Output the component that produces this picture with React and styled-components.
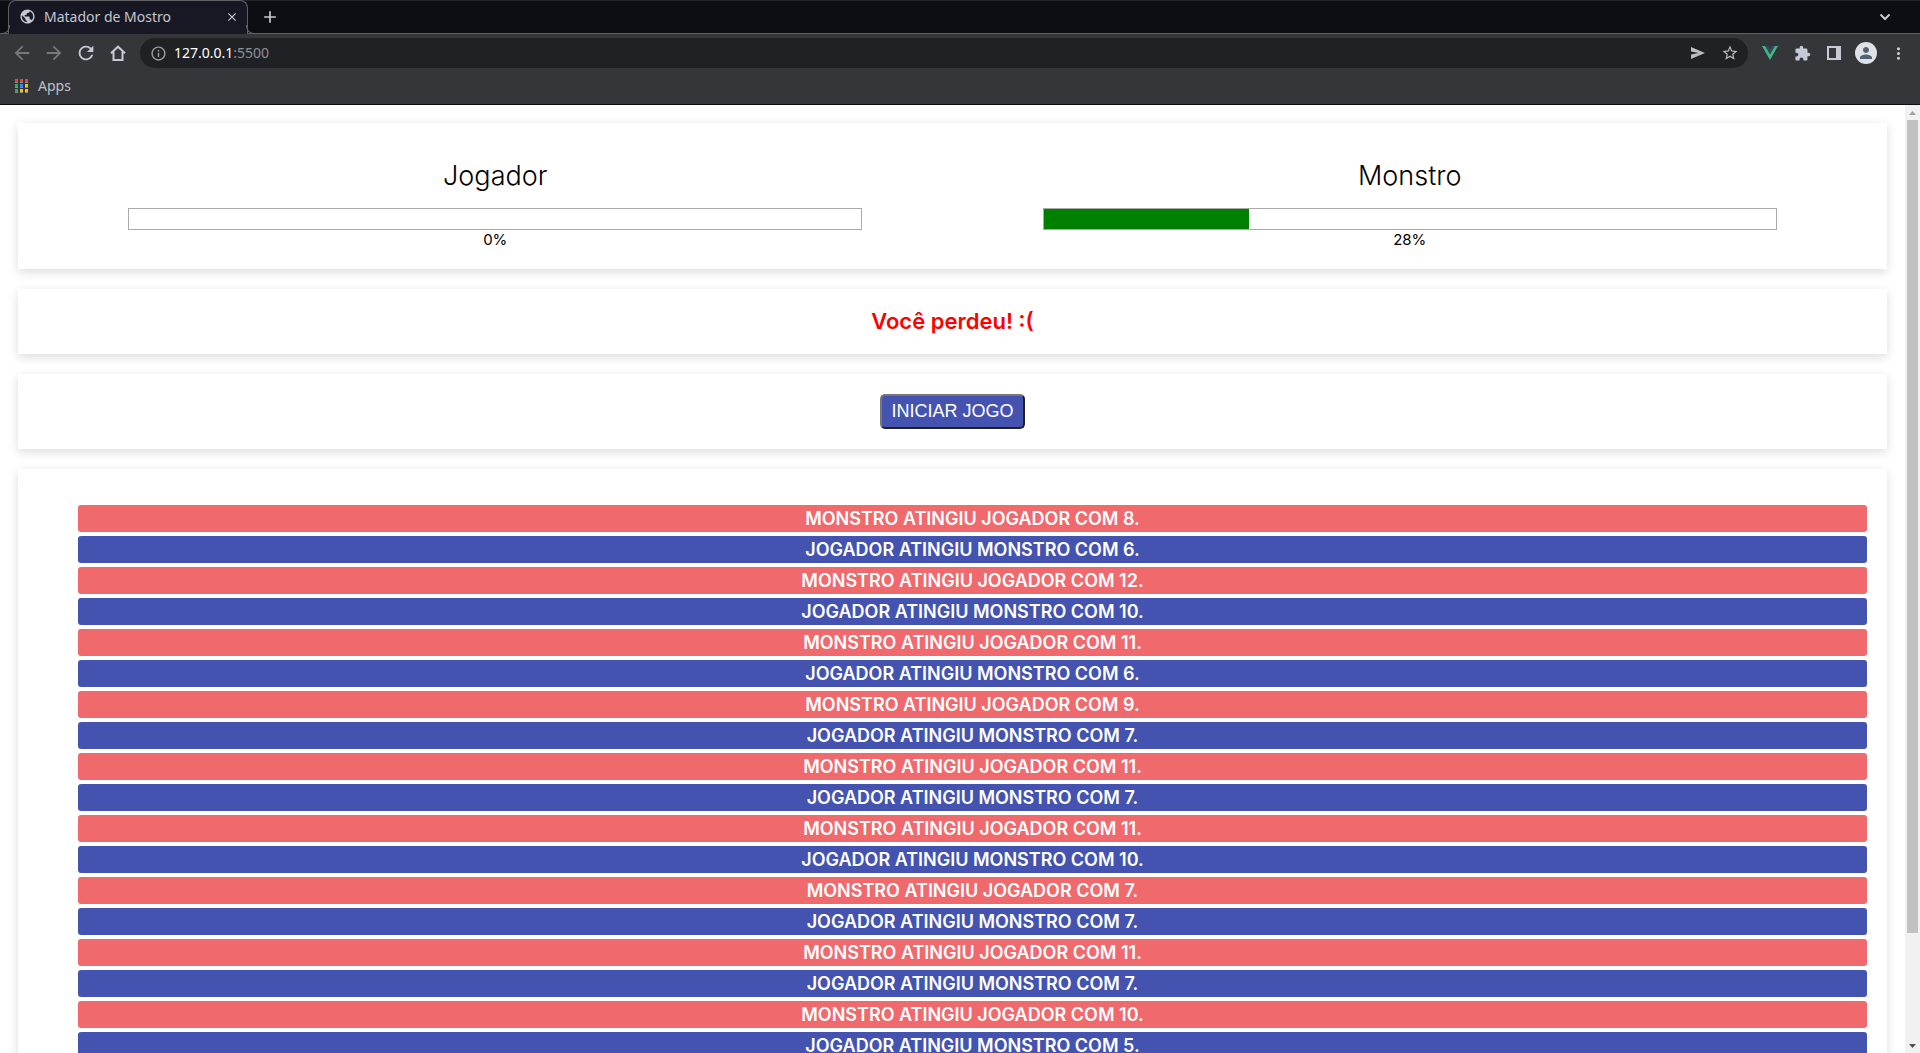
import React from "react";
import styled, { createGlobalStyle } from "styled-components";
import { MdArrowBack, MdArrowForward, MdRefresh, MdInfoOutline, MdStarBorder, MdExtension, MdPublic, MdPerson, MdSend, MdMoreVert, MdClose, MdAdd } from "react-icons/md";

const GlobalStyle = createGlobalStyle`
  * { box-sizing: border-box; }
  body { margin: 0; background: #fff; }
`;

const uiFont = `"Noto Sans", "Open Sans", sans-serif`;
const pageFont = `Inter, "Open Sans", sans-serif`;

const Browser = styled.div`
  display: flex;
  flex-direction: column;
  height: 100vh;
  overflow: hidden;
`;

const TabBar = styled.div`
  display: flex;
  align-items: center;
  height: 34px;
  padding: 0 24px 0 8px;
  background: #0d0e13;
  border-top: 1px solid #24262b;
  border-bottom: 1px solid #5f6064;
  font-family: ${uiFont};
`;

const Tab = styled.div`
  position: relative;
  display: flex;
  align-items: center;
  gap: 8px;
  width: 240px;
  height: 34px;
  padding: 0 7px 2px 10px;
  background: #181825;
  border: 1px solid #5f6064;
  border-bottom: 0;
  border-radius: 8px 8px 0 0;
  color: #c5c6d0;
  font-size: 14px;
  line-height: 20px;

  &::before,
  &::after {
    content: "";
    position: absolute;
    bottom: 0;
    width: 8px;
    height: 8px;
    border-bottom: 1px solid #5f6064;
  }
  &::before {
    left: -8px;
    border-right: 1px solid #5f6064;
    border-radius: 0 0 8px 0;
  }
  &::after {
    right: -8px;
    border-left: 1px solid #5f6064;
    border-radius: 0 0 0 8px;
  }
`;

const TabTitle = styled.span`
  flex: 1;
  white-space: nowrap;
`;

const IconButton = styled.button`
  display: flex;
  align-items: center;
  justify-content: center;
  flex: none;
  width: ${(p) => p.$width || 32}px;
  height: 28px;
  padding: 0;
  border: 0;
  background: none;
  color: ${(p) => p.$color || "#c5cad6"};
`;

const Spacer = styled.div`
  flex: 1;
`;

const Toolbar = styled.div`
  display: flex;
  align-items: center;
  height: 38px;
  padding: 0 6px;
  background: #35363a;
`;

const Omnibox = styled.div`
  display: flex;
  flex: 1;
  align-items: center;
  height: 30px;
  margin: 0 6px;
  padding: 0 2px;
  border-radius: 15px;
  background: #202124;
  font: 14px/20px ${uiFont};
`;

const Address = styled.input`
  field-sizing: content;
  margin: 0;
  padding: 0;
  border: 0;
  outline: 0;
  background: none;
  color: #fff;
  font: inherit;
`;

const Port = styled.span`
  color: #8f9094;
`;

const Bookmarks = styled.nav`
  display: flex;
  align-items: center;
  height: 33px;
  padding: 0 15px 4px;
  background: #35363a;
  border-bottom: 1px solid #0c0d10;
`;

const Bookmark = styled.a`
  display: flex;
  align-items: center;
  gap: 10px;
  color: #bdc1cc;
  font: 14px/20px ${uiFont};
  text-decoration: none;
`;

const AppsGrid = styled.span`
  display: grid;
  grid-template-columns: repeat(3, 3px);
  gap: 1px 2px;
`;

const Dot = styled.i`
  height: 4px;
  background: ${(p) => p.$color};
  border-bottom: 1px solid #8b8c90;
`;

const Avatar = styled.span`
  display: flex;
  align-items: center;
  justify-content: center;
  width: 22px;
  height: 22px;
  border-radius: 50%;
  background: #dee1e6;
  color: #566073;
`;

const Viewport = styled.div`
  display: flex;
  flex: 1;
  min-height: 0;
`;

const Page = styled.main`
  display: flex;
  flex: 1;
  flex-direction: column;
  gap: 20px;
  padding: 18px;
  overflow-y: auto;
  scrollbar-width: none;
  font-family: ${pageFont};
`;

const Panel = styled.section`
  display: flex;
  flex: none;
  justify-content: center;
  padding: 20px;
  background: #fff;
  box-shadow: 0 3px 10px rgba(0, 0, 0, 0.14);
`;

const Score = styled.div`
  display: flex;
  flex: 1;
  flex-direction: column;
  align-items: center;
`;

const Name = styled.h1`
  margin: 16px 0 15px;
  font-size: 27px;
  font-weight: 300;
  line-height: 34px;
`;

const LifeBar = styled.div`
  box-sizing: content-box;
  width: 80%;
  height: 20px;
  border: 1px solid #aaa;
`;

const Life = styled.div`
  height: 100%;
  background: green;
`;

const Percent = styled.div`
  font-size: 15px;
  line-height: 19px;
`;

const Result = styled.div`
  color: red;
  font-size: 22px;
  font-weight: 600;
  line-height: 25px;
`;

const StartButton = styled.button`
  height: 35px;
  padding: 0 9px 1px;
  border: 2px solid;
  border-color: #767676 #212121 #212121 #767676;
  border-radius: 5px;
  background: #4453b0;
  color: #fff;
  font: 18px/20px "Liberation Sans", Arial, sans-serif;
`;

const Log = styled.ul`
  display: flex;
  flex: 1;
  flex-direction: column;
  gap: 4px;
  margin: 16px 0;
  padding: 0 0 0 40px;
  list-style: none;
`;

const Entry = styled.li`
  padding: 2px 0 1px;
  border-radius: 3px;
  background: ${(p) => (p.$monster ? "#f0696d" : "#4453b0")};
  color: #fff;
  font-size: 18px;
  font-weight: 600;
  line-height: 24px;
  text-align: center;
  text-transform: uppercase;
`;

const ScrollBar = styled.div`
  display: flex;
  flex-direction: column;
  width: 15px;
  background: #f1f1f1;
`;

const Arrow = styled.button`
  display: flex;
  align-items: center;
  justify-content: center;
  height: 15px;
  padding: 0;
  border: 0;
  background: none;
  color: ${(p) => p.$color};
`;

const Track = styled.div`
  flex: 1;
  padding: 0 2px;
`;

const Thumb = styled.div`
  height: 88.6%;
  background: #c1c1c1;
`;

const dots = ["#ea4335", "#ea4335", "#ea4335", "#34a853", "#2f86f6", "#fbbc04", "#34a853", "#fbbc04", "#fbbc04"];
const damages = [8, 6, 12, 10, 11, 6, 9, 7, 11, 7, 11, 10, 7, 7, 11, 7, 10, 5];

function Fighter({ name, life }) {
  return (
    <Score>
      <Name>{name}</Name>
      <LifeBar role="progressbar" aria-label={name} aria-valuenow={life}>
        <Life style={{ width: `${life}%` }} />
      </LifeBar>
      <Percent>{life}%</Percent>
    </Score>
  );
}

export default function App() {
  return (
    <>
      <GlobalStyle />
      <Browser>
        <TabBar>
          <Tab>
            <MdPublic size={17} />
            <TabTitle>Matador de Mostro</TabTitle>
            <IconButton $width={16} aria-label="Close tab"><MdClose size={14} /></IconButton>
          </Tab>
          <IconButton $width={44} aria-label="New tab"><MdAdd size={20} /></IconButton>
          <Spacer />
          <IconButton $width={22} aria-label="Search tabs">
            <svg width="12" height="8" viewBox="0 0 12 8" fill="none" stroke="currentColor" strokeWidth="2"><path d="M1.5 1.5 6 6l4.500-4.500" /></svg>
          </IconButton>
        </TabBar>
        <Toolbar>
          <IconButton $color="#77787c" aria-label="Back"><MdArrowBack size={22} /></IconButton>
          <IconButton $color="#77787c" aria-label="Forward"><MdArrowForward size={22} /></IconButton>
          <IconButton aria-label="Reload"><MdRefresh size={22} /></IconButton>
          <IconButton aria-label="Home">
            <svg width="16" height="16" viewBox="0 0 16 16" fill="none" stroke="currentColor" strokeWidth="2"><path d="M1 8.300 8 1.700l7 6.600M3.500 7v8h9V7" /></svg>
          </IconButton>
          <Omnibox>
            <IconButton $color="#9aa0a6" aria-label="Site information"><MdInfoOutline size={17} /></IconButton>
            <Address aria-label="Address" defaultValue="127.0.0.1" />
            <Port>:5500</Port>
            <Spacer />
            <IconButton $color="#bdbdbd" aria-label="Share">
              <svg width="14" height="12" viewBox="0 0 14 12"><path fill="currentColor" d="M0 0l14 6L0 12V7.500L7.500 6 0 4.500z" /></svg>
            </IconButton>
            <IconButton $color="#bdbdbd" aria-label="Bookmark this page"><MdStarBorder size={18} /></IconButton>
          </Omnibox>
          <IconButton aria-label="Vue devtools">
            <svg width="16" height="14" viewBox="0 0 16 14"><path fill="#41b883" d="M0 0h3.200L8 8.300 12.800 0H16L8 14z" /><path fill="#35495e" d="M3.200 0h3L8 3.200 9.800 0h3L8 8.300z" /></svg>
          </IconButton>
          <IconButton aria-label="Extensions"><MdExtension size={17} /></IconButton>
          <IconButton aria-label="Side panel">
            <svg width="14" height="14" viewBox="0 0 14 14"><path fill="currentColor" fillRule="evenodd" d="M0 0h14v14H0zM2 2v10h7V2z" /></svg>
          </IconButton>
          <IconButton aria-label="Profile"><Avatar><MdPerson size={18} /></Avatar></IconButton>
          <IconButton aria-label="Menu"><MdMoreVert size={19} /></IconButton>
        </Toolbar>
        <Bookmarks>
          <Bookmark href="#apps">
            <AppsGrid>{dots.map((color, i) => <Dot key={i} $color={color} />)}</AppsGrid>
            Apps
          </Bookmark>
        </Bookmarks>
        <Viewport>
          <Page>
            <Panel>
              <Fighter name="Jogador" life={0} />
              <Fighter name="Monstro" life={28} />
            </Panel>
            <Panel><Result>Você perdeu! :(</Result></Panel>
            <Panel><StartButton>INICIAR JOGO</StartButton></Panel>
            <Panel>
              <Log>
                {damages.map((damage, i) => (
                  <Entry key={i} $monster={i % 2 === 0}>
                    {`${i % 2 === 0 ? "Monstro atingiu Jogador" : "Jogador atingiu Monstro"} com ${damage}.`}
                  </Entry>
                ))}
              </Log>
            </Panel>
          </Page>
          <ScrollBar>
            <Arrow $color="#a3a3a3" aria-label="Scroll up"><svg width="7" height="4" viewBox="0 0 7 4"><path fill="currentColor" d="M0 4 3.500 0 7 4z" /></svg></Arrow>
            <Track><Thumb /></Track>
            <Arrow $color="#505050" aria-label="Scroll down"><svg width="7" height="4" viewBox="0 0 7 4"><path fill="currentColor" d="M0 0h7L3.500 4z" /></svg></Arrow>
          </ScrollBar>
        </Viewport>
      </Browser>
    </>
  );
}
